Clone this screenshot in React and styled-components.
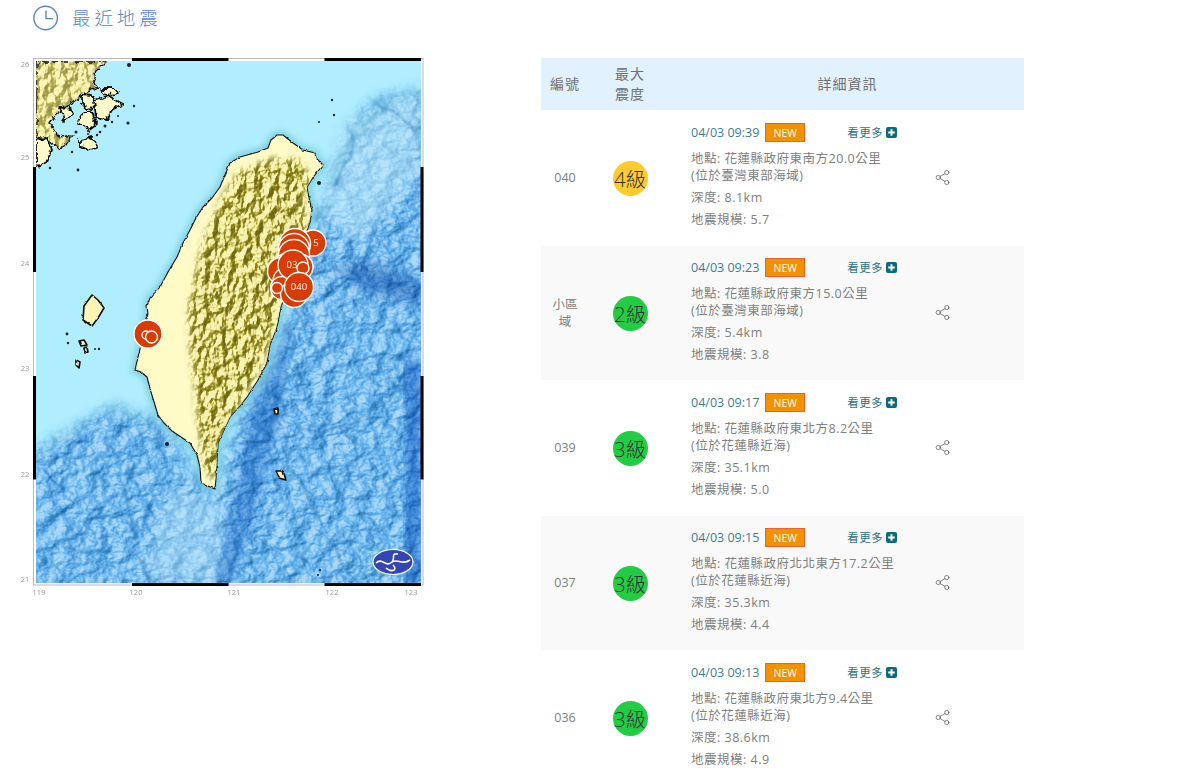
import React from "react";
import styled, { createGlobalStyle } from "styled-components";
import { Share2 } from "lucide-react";

const GlobalStyle = createGlobalStyle`
  html, body { margin: 0; padding: 0; background: #fff; overflow: hidden; height: 784px; }
  body { font-family: "Open Sans", "Noto Sans CJK TC", sans-serif; color: #777; }
`;

const Page = styled.div`
  width: 1200px;
`;

const TitleBar = styled.div`
  display: flex;
  align-items: center;
  height: 36px;
  padding-left: 33px;
  gap: 13px;
`;

const Title = styled.h2`
  margin: 0 0 3px;
  font-size: 18.5px;
  font-weight: 300;
  letter-spacing: 3.9px;
  color: #5a88c0;
`;

const Columns = styled.div`
  display: flex;
  align-items: flex-start;
  padding-top: 20px;
  padding-left: 20px;
`;

const MapFigure = styled.svg`
  display: block;
  width: 406px;
  height: 544px;
  flex: none;
`;

const Table = styled.div`
  width: 483px;
  margin-left: 115px;
  margin-top: 2px;
`;

const HeadRow = styled.div`
  display: grid;
  grid-template-columns: 48px 82px 1fr;
  align-items: center;
  box-sizing: border-box;
  height: 52px;
  padding-bottom: 1px;
  background: #e2f1fe;
  text-align: center;
  font-size: 14px;
  line-height: 20px;
  letter-spacing: 1px;
  color: #707070;
`;

const Row = styled.div`
  display: grid;
  grid-template-columns: 48px 82px 1fr;
  align-items: center;
  height: 135px;
  background: ${(p) => (p.$shaded ? "#f9f9f9" : "#fff")};
  box-shadow: ${(p) => (p.$shaded ? "inset 0 1px 0 #fff" : "none")};
`;

const NumberCell = styled.div`
  text-align: center;
  font-size: 12.5px;
  line-height: 17px;
  padding: 0 10px;
  color: #808080;
`;

const LevelCell = styled.div`
  display: flex;
  justify-content: center;
  padding-top: 1px;
`;

const Level = styled.div`
  width: 35px;
  height: 35px;
  border-radius: 50%;
  display: flex;
  align-items: center;
  justify-content: center;
  white-space: nowrap;
  background: ${(p) => p.$color};
  color: #333;
  font-size: 20.5px;
  font-weight: 300;
`;

const DetailCell = styled.div`
  display: flex;
  align-items: center;
  padding-left: 20px;
`;

const Info = styled.div`
  width: 242.5px;
  padding-bottom: 4px;
  font-size: 12.5px;
  line-height: 17px;
  letter-spacing: 0.5px;
  color: #808080;
`;

const TopLine = styled.div`
  display: flex;
  align-items: center;
  width: 206px;
  height: 19px;
  margin-bottom: 8px;
`;

const DateText = styled.span`
  font-size: 12.5px;
  letter-spacing: 0;
  color: #3f7f8f;
`;

const NewBadge = styled.span`
  margin-left: 6px;
  width: 40px;
  height: 19px;
  box-sizing: border-box;
  border: 1px solid #e8622c;
  background: #f39200;
  color: #fff;
  font-size: 10.5px;
  letter-spacing: 0;
  line-height: 18px;
  text-align: center;
`;

const MoreLink = styled.a`
  margin-left: auto;
  display: flex;
  align-items: center;
  gap: 3px;
  font-size: 11.5px;
  letter-spacing: 0.4px;
  color: #2f7484;
`;

const PlusBox = styled.svg`
  display: block;
  width: 11px;
  height: 11px;
`;

const InfoLine = styled.div`
  margin-top: ${(p) => (p.$gap ? "5px" : "0")};
`;

const ShareIcon = styled(Share2)`
  display: block;
  color: #666;
`;

const ClockIcon = () => (
  <svg width="26" height="26" viewBox="0 0 26 26" fill="none" stroke="#5a88c0" strokeWidth="1.4">
    <circle cx="12.6" cy="13" r="11.8" />
    <path d="M13 5.5V13.6H20" />
  </svg>
);

const PlusIcon = () => (
  <PlusBox viewBox="0 0 11 11">
    <rect width="11" height="11" rx="2" fill="#0d6a7c" />
    <path d="M5.5 2.2v6.6M2.2 5.5h6.6" stroke="#fff" strokeWidth="2" />
  </PlusBox>
);

const YELLOW = "#ffcb2f";
const GREEN = "#22cc44";

const quakes = [
  { id: "040", level: 4, color: YELLOW, time: "04/03 09:39", place: "花蓮縣政府東南方20.0公里", area: "(位於臺灣東部海域)", depth: "8.1km", mag: "5.7" },
  { id: "小區域", level: 2, color: GREEN, time: "04/03 09:23", place: "花蓮縣政府東方15.0公里", area: "(位於臺灣東部海域)", depth: "5.4km", mag: "3.8" },
  { id: "039", level: 3, color: GREEN, time: "04/03 09:17", place: "花蓮縣政府東北方8.2公里", area: "(位於花蓮縣近海)", depth: "35.1km", mag: "5.0" },
  { id: "037", level: 3, color: GREEN, time: "04/03 09:15", place: "花蓮縣政府北北東方17.2公里", area: "(位於花蓮縣近海)", depth: "35.3km", mag: "4.4" },
  { id: "036", level: 3, color: GREEN, time: "04/03 09:13", place: "花蓮縣政府東北方9.4公里", area: "(位於花蓮縣近海)", depth: "38.6km", mag: "4.9" },
];

const TAIWAN =
  "M283 135 L277 135 L271 140 L268 148 L258 152 L240 157 L230 163 L225 175 L220 187 L212 198 L203 207 L196 218 L190 230 L183 243 L177 257 L168 272 L160 287 L150 298 L147 306 L148 314 L145 322 L141 345 L138 357 L135 370 L141 372 L147 377 L151 392 L158 415 L164 423 L172 431 L190 443 L197 455 L200 467 L201 483 L208 486 L215 489 L216 478 L218 443 L224 430 L230 417 L240 406 L247 397 L258 380 L267 363 L270 345 L277 327 L281 307 L288 285 L296 262 L304 240 L310 222 L312 210 L309 198 L307 187 L314 176 L323 165 L316 158 L315 153 L303 150 L293 143 Z";

const MOUNTAINS =
  "M238 172 L270 158 L300 160 L312 180 L304 195 L308 225 L296 255 L282 300 L272 340 L254 380 L228 425 L214 482 L204 470 L198 430 L195 390 L190 350 L188 310 L195 270 L205 235 L220 200 Z";

const CHINA =
  "M36 61 L106 61 L97 70 L93 78 L97 87 L88 92 L80 97 L72 103 L66 108 L56 115 L50 123 L55 132 L60 137 L72 135 L66 145 L58 148 L48 140 L36 137 Z";

const ISLANDS = [
  "M100 88 L114 88 L118 93 L106 96 Z",
  "M82 95 L92 96 L97 104 L90 110 L82 104 Z",
  "M94 100 L108 96 L122 104 L112 110 L106 120 L96 118 Z",
  "M84 112 L92 112 L96 124 L88 130 L78 122 Z",
  "M60 107 L70 106 L72 114 L64 120 Z",
  "M80 140 L92 138 L98 146 L88 150 L80 146 Z",
  "M36 140 L46 138 L52 150 L46 163 L36 166 Z",
  "M84 306 L92 295 L98 300 L104 308 L98 318 L92 326 L83 320 Z",
  "M79 341 L84 340 L87 345 L81 346 Z",
  "M76 360 L80 362 L79 368 L76 365 Z",
  "M84 348 L87 347 L88 352 L85 353 Z",
  "M274 409 L278 408 L278 414 L275 414 Z",
  "M276 471 L283 471 L286 480 L279 478 Z",
];

const DOTS = [
  [129, 65, 2], [134, 106, 1.2], [128, 123, 1.6], [332, 100, 1.2], [334, 115, 1.2], [319, 122, 1], [319, 183, 2],
  [67, 334, 1.4], [68, 343, 1.2], [99, 349, 1.2], [95, 349, 1], [167, 444, 2], [320, 570, 1], [318, 575, 1],
  [100, 132, 1.3], [105, 126, 1.5], [112, 122, 1.2], [76, 132, 1.5], [72, 152, 1.2], [78, 170, 1.4], [50, 168, 1.3],
  [118, 116, 1], [97, 135, 1.2], [88, 134, 1],
];

const RIDGES = [
  "M283 300 C272 340 268 380 262 420 C250 470 252 520 226 583",
  "M296 310 C300 350 276 390 272 430",
  "M282 432 C292 480 320 520 350 575",
  "M300 430 C340 435 360 420 400 390 C385 380 378 350 405 360",
  "M130 450 C120 490 130 530 150 580",
  "M60 548 L112 552",
  "M345 120 C365 150 345 170 330 185",
  "M360 95 C400 110 405 125 418 130",
];

const SHALLOW_EDGES = [
  "M36 458 C60 440 85 420 110 405 C125 415 140 410 150 430",
  "M330 180 C345 150 360 110 420 88",
];

const MARKERS = [
  { x: 313, y: 243, r: 13, label: "5", lx: 316 },
  { x: 295, y: 244, r: 15.5 }, { x: 294, y: 249, r: 15.5 }, { x: 294, y: 255, r: 15.5 },
  { x: 288, y: 268, r: 15 }, { x: 300, y: 267, r: 13 },
  { x: 281, y: 271, r: 13.5 }, { x: 287, y: 281, r: 14 }, { x: 282, y: 288, r: 11.5 }, { x: 294, y: 294, r: 13.5 },
  { x: 293, y: 265, r: 15, label: "03", lx: 292 },
  { x: 303, y: 268, r: 6 }, { x: 277, y: 288, r: 5.5 },
  { x: 299, y: 287, r: 14.5, label: "040", lx: 299 },
  { x: 148, y: 334, r: 14 }, { x: 146, y: 335, r: 4 }, { x: 151.5, y: 337, r: 6 },
];

const TICKS_X = [[119, 39], [120, 136], [121, 234], [122, 332], [123, 411]];
const TICKS_Y = [[26, 67], [25, 160], [24, 266], [23, 371], [22, 477], [21, 582]];

const BARS = [
  "M132 59.5H228.5", "M324.5 59.5H421", "M132 584.5H228.5", "M324.5 584.5H421",
  "M34.5 167V272", "M34.5 376V479.5", "M422 167V272", "M422 376V479.5",
];

const TaiwanMap = () => (
  <MapFigure viewBox="20 56 406 544">
    <defs>
      <clipPath id="plot"><rect x="36" y="61" width="385" height="522" /></clipPath>
      <clipPath id="isle"><path d={TAIWAN} /></clipPath>
      <clipPath id="china"><path d={CHINA} /></clipPath>
      <filter id="b3"><feGaussianBlur stdDeviation="3" /></filter>
      <filter id="b6" x="-30%" y="-30%" width="160%" height="160%"><feGaussianBlur stdDeviation="7" /></filter>
      <filter id="wiggle" x="-10%" y="-10%" width="120%" height="120%">
        <feTurbulence type="fractalNoise" baseFrequency="0.04" numOctaves="3" seed="5" />
        <feDisplacementMap in="SourceGraphic" scale="14" xChannelSelector="R" yChannelSelector="G" />
        <feGaussianBlur stdDeviation="0.9" />
      </filter>
      <filter id="rough" x="-10%" y="-10%" width="120%" height="120%">
        <feTurbulence type="fractalNoise" baseFrequency="0.16" numOctaves="3" seed="2" />
        <feDisplacementMap in="SourceGraphic" scale="7" xChannelSelector="R" yChannelSelector="G" />
      </filter>
      <filter id="roughSmall" x="-5%" y="-5%" width="110%" height="110%">
        <feTurbulence type="fractalNoise" baseFrequency="0.2" numOctaves="2" seed="7" />
        <feDisplacementMap in="SourceGraphic" scale="2.5" xChannelSelector="R" yChannelSelector="G" />
      </filter>
      <filter id="seaRelief" x="0" y="0" width="100%" height="100%" colorInterpolationFilters="sRGB">
        <feTurbulence type="fractalNoise" baseFrequency="0.05 0.07" numOctaves="5" seed="8" />
        <feDiffuseLighting surfaceScale="5" diffuseConstant="0.87" lightingColor="#ffffff">
          <feDistantLight azimuth="200" elevation="60" />
        </feDiffuseLighting>
        <feComponentTransfer>
          <feFuncR type="table" tableValues="0.05 0.12 0.27 0.45 0.95" />
          <feFuncG type="table" tableValues="0.3 0.42 0.57 0.74 0.98" />
          <feFuncB type="table" tableValues="0.55 0.64 0.82 0.95 1" />
        </feComponentTransfer>
      </filter>
      <filter id="landRelief" x="0" y="0" width="100%" height="100%" colorInterpolationFilters="sRGB">
        <feTurbulence type="fractalNoise" baseFrequency="0.12 0.09" numOctaves="4" seed="4" />
        <feDiffuseLighting surfaceScale="6" diffuseConstant="0.95" lightingColor="#ffffff">
          <feDistantLight azimuth="215" elevation="50" />
        </feDiffuseLighting>
        <feComponentTransfer>
          <feFuncR type="table" tableValues="0.42 0.5 0.64 0.93 1" />
          <feFuncG type="table" tableValues="0.4 0.47 0.6 0.9 0.99" />
          <feFuncB type="table" tableValues="0.08 0.12 0.2 0.58 0.78" />
        </feComponentTransfer>
      </filter>
      <mask id="deepMask" maskUnits="userSpaceOnUse" x="36" y="61" width="385" height="522">
        <g filter="url(#b6)" fill="#fff">
          <path d="M440 85 L375 98 L345 130 L328 175 L316 215 L292 300 L270 370 L240 415 L226 450 L222 480 L206 496 L192 464 L178 442 L155 418 L112 405 L70 430 L10 462 L10 600 L440 600 Z" />
        </g>
      </mask>
      <mask id="mountainMask" maskUnits="userSpaceOnUse" x="36" y="61" width="385" height="522">
        <path d={MOUNTAINS} fill="#fff" filter="url(#b3)" />
      </mask>
    </defs>
    <g clipPath="url(#plot)">
      <rect x="36" y="61" width="385" height="522" fill="#b0eeff" />
      <g mask="url(#deepMask)">
        <rect x="36" y="61" width="385" height="522" filter="url(#seaRelief)" />
        <path d="M170 490 L222 500 L224 583 L140 583 Z" fill="#bfe9fb" opacity="0.45" filter="url(#b6)" />
        <path d="M330 130 L421 90 L421 170 L360 240 L320 215 Z" fill="#c4effd" opacity="0.55" filter="url(#b6)" />
        <path d="M330 268 L370 262 L421 282 L421 305 L370 292 Z" fill="#1f6cb8" opacity="0.55" style={{ mixBlendMode: "multiply" }} filter="url(#b6)" />
        <path d="M262 330 L290 320 L280 420 L250 530 L232 583 L215 583 L240 470 Z" fill="#3d8fd4" opacity="0.5" style={{ mixBlendMode: "multiply" }} filter="url(#b3)" />
        <path d="M405 360 L421 360 L421 583 L405 583 Z" fill="#3f8fd6" opacity="0.7" style={{ mixBlendMode: "multiply" }} filter="url(#b3)" />
        {SHALLOW_EDGES.map((d) => (
          <path key={d} d={d} fill="none" stroke="#3d9ab8" strokeWidth="5" opacity="0.4" filter="url(#b3)" />
        ))}
        <g filter="url(#wiggle)">
          {RIDGES.map((d) => (
            <path key={d} d={d} fill="none" stroke="#1f6caf" strokeWidth="1.8" opacity="0.6" />
          ))}
        </g>
      </g>

      <path d={TAIWAN} fill="none" stroke="#4fb3c4" strokeWidth="7" opacity="0.55" filter="url(#b3)" />
      <g filter="url(#roughSmall)">
        <path d={TAIWAN} fill="#fffbc6" stroke="#111" strokeWidth="1.1" strokeLinejoin="round" />
      </g>
      <g clipPath="url(#isle)">
        <g mask="url(#mountainMask)">
          <rect x="180" y="130" width="140" height="360" filter="url(#landRelief)" />
        </g>
      </g>

      <path d={CHINA} fill="#fffbc6" />
      <g clipPath="url(#china)">
        <rect x="36" y="61" width="70" height="90" filter="url(#landRelief)" opacity="0.7" />
      </g>
      <g filter="url(#rough)">
        <path d={CHINA} fill="none" stroke="#111" strokeWidth="1.4" strokeLinejoin="round" />
        {ISLANDS.slice(0, 7).map((d) => (
          <path key={d} d={d} fill="#fffbc6" stroke="#111" strokeWidth="1.8" strokeLinejoin="round" />
        ))}
      </g>
      <g filter="url(#roughSmall)">
        {ISLANDS.slice(7).map((d) => (
          <path key={d} d={d} fill="#fff3b8" stroke="#111" strokeWidth="1.6" strokeLinejoin="round" />
        ))}
      </g>
      {DOTS.map(([x, y, r]) => (
        <circle key={`${x}-${y}`} cx={x} cy={y} r={r} fill="#222" />
      ))}

      <ellipse cx="393" cy="562" rx="20" ry="12.5" fill="#3346b4" stroke="#fff" strokeWidth="1.2" />
      <path
        d="M376 563 C382 557 386 568 392 562 C396 558 390 553 398 554 M392 562 C398 558 402 566 410 560 M386 568 C392 573 398 570 393 565"
        fill="none"
        stroke="#fff"
        strokeWidth="1.6"
      />

      {MARKERS.map((m) => (
        <g key={`${m.x}-${m.y}-${m.r}`}>
          <circle cx={m.x} cy={m.y} r={m.r} fill="#d83c02" stroke="#fff" strokeWidth="1.4" />
          {m.label && (
            <text x={m.lx} y={m.y + 3.4} textAnchor="middle" fontSize="9.5" fill="#fff" fontFamily="Open Sans, sans-serif">
              {m.label}
            </text>
          )}
        </g>
      ))}
    </g>

    <rect x="33.5" y="58.5" width="389.5" height="526.5" fill="none" stroke="#b9b9b9" />
    {BARS.map((d) => (
      <path key={d} d={d} stroke="#000" strokeWidth="3" fill="none" />
    ))}
    {TICKS_X.map(([t, x]) => (
      <text key={t} x={x} y="595" textAnchor="middle" fontSize="7.5" fill="#999" fontFamily="Open Sans, sans-serif">{t}</text>
    ))}
    {TICKS_Y.map(([t, y]) => (
      <text key={t} x="25" y={y} textAnchor="middle" fontSize="7.5" fill="#999" fontFamily="Open Sans, sans-serif">{t}</text>
    ))}
  </MapFigure>
);

const QuakeRow = ({ quake, shaded }) => (
  <Row $shaded={shaded}>
    <NumberCell>{quake.id}</NumberCell>
    <LevelCell>
      <Level $color={quake.color}>{quake.level}級</Level>
    </LevelCell>
    <DetailCell>
      <Info>
        <TopLine>
          <DateText>{quake.time}</DateText>
          <NewBadge>NEW</NewBadge>
          <MoreLink>看更多<PlusIcon /></MoreLink>
        </TopLine>
        <InfoLine>地點: {quake.place}</InfoLine>
        <InfoLine>{quake.area}</InfoLine>
        <InfoLine $gap>深度: {quake.depth}</InfoLine>
        <InfoLine $gap>地震規模: {quake.mag}</InfoLine>
      </Info>
      <ShareIcon size={17} strokeWidth={1.1} />
    </DetailCell>
  </Row>
);

export default function App() {
  return (
    <Page>
      <GlobalStyle />
      <TitleBar>
        <ClockIcon />
        <Title>最近地震</Title>
      </TitleBar>
      <Columns>
        <TaiwanMap />
        <Table>
          <HeadRow>
            <span>編號</span>
            <span>最大<br />震度</span>
            <span>詳細資訊</span>
          </HeadRow>
          {quakes.map((q, i) => (
            <QuakeRow key={q.time} quake={q} shaded={i % 2 === 1} />
          ))}
        </Table>
      </Columns>
    </Page>
  );
}
